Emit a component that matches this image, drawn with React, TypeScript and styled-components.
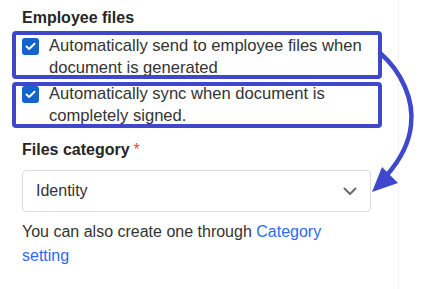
import React from "react";
import styled, { createGlobalStyle } from "styled-components";

const GlobalStyle = createGlobalStyle`
  html, body { margin: 0; padding: 0; background: #ffffff; }
  body { font-family: "Liberation Sans", Arial, sans-serif; color: #333333; }
  * { box-sizing: border-box; }
`;

const Page = styled.div`
  position: relative;
  width: 437px;
  height: 289px;
  overflow: hidden;
`;

const Panel = styled.div`
  width: 399px;
  height: 289px;
  border-right: 1px solid #f3f3f3;
  padding: 7px 0 0 22px;
  display: flex;
  flex-direction: column;
`;

const SectionTitle = styled.div<{ $mt?: number }>`
  font-size: 16px;
  font-weight: 700;
  line-height: 22px;
  color: #262626;
  margin-top: ${(p) => p.$mt ?? 0}px;
`;

const Required = styled.span`
  color: #e8473f;
  font-weight: 400;
  margin-left: 4px;
`;

const CheckRow = styled.label<{ $mt: number }>`
  display: flex;
  align-items: flex-start;
  gap: 10px;
  width: 349px;
  margin-top: ${(p) => p.$mt}px;
  font-size: 16.6px;
  line-height: 22px;
  color: #333333;
`;

const Box = styled.span`
  flex: none;
  width: 17px;
  height: 17px;
  margin-top: 3px;
  border-radius: 3px;
  background: #1462cc;
  display: flex;
  align-items: center;
  justify-content: center;
`;

const Select = styled.div`
  margin-top: 9px;
  width: 349px;
  height: 42px;
  border: 1px solid #dcdcdc;
  border-radius: 4px;
  padding: 0 13px 0 13px;
  display: flex;
  align-items: center;
  justify-content: space-between;
  font-size: 16px;
  color: #333333;
`;

const Help = styled.p`
  margin: 8px 0 0 0;
  width: 349px;
  font-size: 16px;
  line-height: 24px;
  color: #333333;
`;

const Link = styled.a`
  color: #2b6cf0;
  text-decoration: none;
`;

const Overlay = styled.svg`
  position: absolute;
  left: 0;
  top: 0;
  width: 437px;
  height: 289px;
  pointer-events: none;
`;

const Check = () => (
  <svg width="11" height="9" viewBox="0 0 11 9">
    <path d="M1.5 4.6 L4.2 7 L9.5 1.8" fill="none" stroke="#fff" strokeWidth="2" strokeLinecap="round" strokeLinejoin="round" />
  </svg>
);

const Chevron = () => (
  <svg width="14" height="9" viewBox="0 0 14 9">
    <path d="M1.5 1.5 L7 7 L12.5 1.5" fill="none" stroke="#6b6b6b" strokeWidth="2" strokeLinecap="round" strokeLinejoin="round" />
  </svg>
);

export default function App() {
  const ink = "#3f48cc";
  return (
    <Page>
      <GlobalStyle />
      <Panel>
        <SectionTitle>Employee files</SectionTitle>
        <CheckRow $mt={6}>
          <Box><Check /></Box>
          <span>Automatically send to employee files when document is generated</span>
        </CheckRow>
        <CheckRow $mt={4}>
          <Box><Check /></Box>
          <span>Automatically sync when document is completely signed.</span>
        </CheckRow>
        <SectionTitle $mt={12}>
          Files category<Required>*</Required>
        </SectionTitle>
        <Select>
          <span>Identity</span>
          <Chevron />
        </Select>
        <Help>
          You can also create one through <Link href="#">Category setting</Link>
        </Help>
      </Panel>
      <Overlay viewBox="0 0 437 289">
        <rect x="14" y="33" width="366" height="44" rx="2" fill="none" stroke={ink} strokeWidth="4" />
        <rect x="14" y="84" width="366" height="42" rx="2" fill="none" stroke={ink} strokeWidth="4" />
        <path d="M380 53 C402 72, 414 100, 411 125 C409 145, 400 160, 387 175" fill="none" stroke={ink} strokeWidth="4.5" strokeLinecap="round" />
        <polygon points="372,192 382,167 398,183" fill={ink} />
      </Overlay>
    </Page>
  );
}
